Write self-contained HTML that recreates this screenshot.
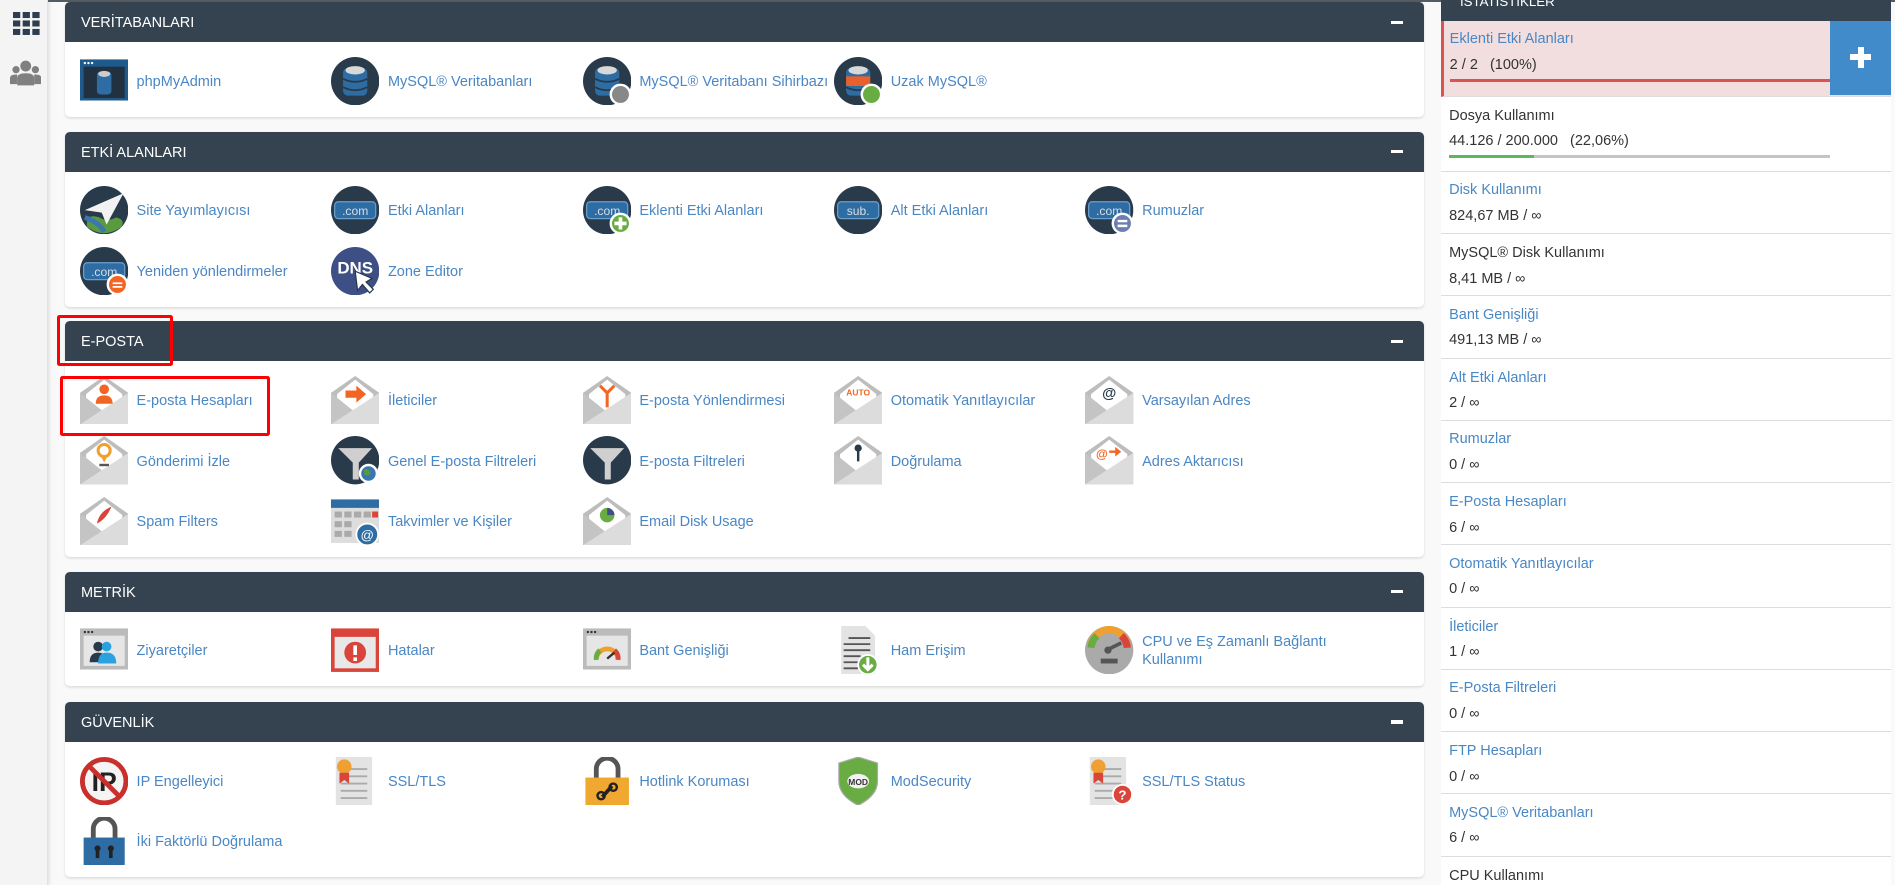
<!DOCTYPE html>
<html><head><meta charset="utf-8"><style>
*{box-sizing:border-box;margin:0;padding:0}
html,body{width:1895px;height:885px;overflow:hidden;background:#f9f9f9}
#w{zoom:1.2086;width:1568px;height:732px;position:relative;font-family:"Liberation Sans",sans-serif;font-size:12px;color:#333}
.sb{position:absolute;left:0;top:0;width:40px;height:732px;background:#f4f4f4;border-right:1px solid #e2e2e2;box-shadow:1px 0 3px rgba(0,0,0,.12)}
.topline{position:absolute;left:40px;top:0;width:1528px;height:2px;background:#555c63}
.p{position:absolute;left:54px;width:1124px;background:#fff;border-radius:4px;box-shadow:0 1px 2px rgba(0,0,0,.12)}
.h{height:33px;background:#34434f;border-radius:4px 4px 0 0;color:#fff;font-size:12px;line-height:35px;padding-left:13px;position:relative}
.h:after{content:"";position:absolute;right:17px;top:15px;width:10px;height:3px;background:#fff}
.it{position:absolute;width:205px;height:44px;display:flex;align-items:center}
.it svg{width:40px;height:40px;flex:none;margin-right:7px}
.it span{color:#4a87c5;font-size:12px;line-height:15px;padding-top:2px}
.st{position:absolute;left:1192px;width:373px;background:#fff;border-bottom:1px solid #ddd;padding-left:7px}
.st .l{color:#4a87c5;position:absolute;top:9px;left:7px}
.st .v{position:absolute;top:30px;left:7px;color:#333}
.st .d{color:#333}
.red{position:absolute;border:3px solid #f00;border-radius:2px}
</style></head><body><div id="w">
<svg width="0" height="0" style="position:absolute"><defs>
<symbol id="env" viewBox="0 0 40 40"><path d="M0 14L20 0L40 14V40H0Z" fill="#bdbdbd"/><path d="M20 3L35 15V26L20 32L5 26V15Z" fill="#fff"/><path d="M0 14L20 30L0 40Z" fill="#c4c4c4"/><path d="M40 14V40H0Z" fill="#dcdcdc"/></symbol>
<symbol id="db" viewBox="0 0 40 40"><circle cx="20" cy="20" r="20" fill="#293a4a"/><rect x="10" y="9" width="20" height="23" rx="4" fill="#2e6da4"/><ellipse cx="20" cy="11" rx="8" ry="3.5" fill="#d8d8d8"/><path d="M10 18Q20 23 30 18M10 25Q20 30 30 25" stroke="#293a4a" stroke-width="1.5" fill="none"/></symbol>
<symbol id="com" viewBox="0 0 40 40"><circle cx="20" cy="20" r="20" fill="#293a4a"/><rect x="3" y="13" width="34" height="14" rx="3" fill="#2e6da4" stroke="#6aa0cf"/></symbol>
<symbol id="win" viewBox="0 0 40 40"><rect x="0" y="2" width="40" height="34" fill="#bbb"/><rect x="3" y="8" width="34" height="25" fill="#e6e6e6"/><circle cx="4" cy="5" r="1" fill="#333"/><circle cx="7" cy="5" r="1" fill="#333"/><circle cx="10" cy="5" r="1" fill="#333"/></symbol>
<symbol id="doc" viewBox="0 0 40 40"><rect x="4" y="0" width="30" height="40" fill="#e3e3e3"/><path d="M12 10H30M12 16H30M8 22H30M8 28H30M8 34H30" stroke="#aaa" stroke-width="1.5"/><circle cx="11" cy="8" r="6" fill="#f0a030"/><path d="M7 13V22L11 19L15 22V13Z" fill="#d9453b"/></symbol>
</defs></svg>
<div class="sb"><svg style="position:absolute;left:11px;top:10px" width="22" height="20"><g fill="#2d3e50"><rect x="0" y="0" width="6" height="5"/><rect x="8" y="0" width="6" height="5"/><rect x="16" y="0" width="6" height="5"/><rect x="0" y="7" width="6" height="5"/><rect x="8" y="7" width="6" height="5"/><rect x="16" y="7" width="6" height="5"/><rect x="0" y="14" width="6" height="5"/><rect x="8" y="14" width="6" height="5"/><rect x="16" y="14" width="6" height="5"/></g></svg>
<svg style="position:absolute;left:8px;top:50px" width="26" height="22"><g fill="#808080"><circle cx="13" cy="5" r="4.5"/><circle cx="5" cy="8" r="3"/><circle cx="21" cy="8" r="3"/><path d="M6 21V15Q6 11 13 11Q20 11 20 15V21Z"/><path d="M0 20V15Q0 12 5 12L6 12V20Z"/><path d="M26 20V15Q26 12 21 12L20 12V20Z"/></g></svg></div>
<div class="topline"></div>

<div class="p" style="top:2px;height:95px"><div class="h">VERİTABANLARI</div>
<div class="it" style="left:12px;top:43px"><svg viewBox="0 0 40 40"><rect y="2" width="40" height="34" fill="#1e5b8c"/><rect x="3" y="8" width="34" height="26" fill="#22313f"/><circle cx="4" cy="5" r="1" fill="#fff"/><circle cx="7" cy="5" r="1" fill="#fff"/><circle cx="10" cy="5" r="1" fill="#fff"/><rect x="14" y="12" width="12" height="19" rx="3" fill="#2e6da4"/><ellipse cx="20" cy="14" rx="5" ry="2.5" fill="#ccc"/></svg><span>phpMyAdmin</span></div>
<div class="it" style="left:220px;top:43px"><svg><use href="#db"/></svg><span>MySQL® Veritabanları</span></div>
<div class="it" style="left:428px;top:43px"><svg viewBox="0 0 40 40"><use href="#db"/><circle cx="31" cy="31" r="8" fill="#888" stroke="#fff" stroke-width="2"/></svg><span>MySQL® Veritabanı Sihirbazı</span></div>
<div class="it" style="left:636px;top:43px"><svg viewBox="0 0 40 40"><use href="#db"/><rect x="10" y="16" width="20" height="8" fill="#e8602c"/><circle cx="31" cy="31" r="8" fill="#6aac44" stroke="#fff" stroke-width="2"/></svg><span>Uzak MySQL®</span></div>
</div>

<div class="p" style="top:109px;height:145px"><div class="h">ETKİ ALANLARI</div>
<div class="it" style="left:12px;top:43px"><svg viewBox="0 0 40 40"><circle cx="20" cy="20" r="20" fill="#293a4a"/><path d="M6 34Q4 22 16 26Q22 30 30 26Q38 28 34 34Q20 44 6 34Z" fill="#5a9a3f"/><path d="M4 26Q16 30 20 38" stroke="#3a76b0" stroke-width="4" fill="none"/><path d="M4 20L36 6L22 32L18 22Z" fill="#f2f2f2"/></svg><span>Site Yayımlayıcısı</span></div>
<div class="it" style="left:220px;top:43px"><svg viewBox="0 0 40 40"><use href="#com"/><text x="20" y="24" font-size="10" fill="#ddd" text-anchor="middle" font-family="Liberation Sans">.com</text></svg><span>Etki Alanları</span></div>
<div class="it" style="left:428px;top:43px"><svg viewBox="0 0 40 40"><use href="#com"/><text x="20" y="24" font-size="10" fill="#ddd" text-anchor="middle" font-family="Liberation Sans">.com</text><circle cx="31" cy="31" r="8" fill="#6aac44" stroke="#fff" stroke-width="2"/><path d="M31 26V36M26 31H36" stroke="#fff" stroke-width="3"/></svg><span>Eklenti Etki Alanları</span></div>
<div class="it" style="left:636px;top:43px"><svg viewBox="0 0 40 40"><use href="#com"/><text x="20" y="24" font-size="10" fill="#ddd" text-anchor="middle" font-family="Liberation Sans">sub.</text></svg><span>Alt Etki Alanları</span></div>
<div class="it" style="left:844px;top:43px"><svg viewBox="0 0 40 40"><use href="#com"/><text x="20" y="24" font-size="10" fill="#ddd" text-anchor="middle" font-family="Liberation Sans">.com</text><circle cx="31" cy="31" r="8" fill="#6d7fb0" stroke="#fff" stroke-width="2"/><path d="M27 29H35M27 33H35" stroke="#fff" stroke-width="2"/></svg><span>Rumuzlar</span></div>
<div class="it" style="left:12px;top:93px"><svg viewBox="0 0 40 40"><use href="#com"/><text x="20" y="24" font-size="10" fill="#ddd" text-anchor="middle" font-family="Liberation Sans">.com</text><circle cx="31" cy="31" r="8" fill="#f26522" stroke="#fff" stroke-width="2"/><path d="M27 30H35M27 33H35" stroke="#fff" stroke-width="1.5"/></svg><span>Yeniden yönlendirmeler</span></div>
<div class="it" style="left:220px;top:93px"><svg viewBox="0 0 40 40"><circle cx="20" cy="20" r="20" fill="#3d4f84"/><text x="20" y="22" font-size="14" font-weight="bold" fill="#fff" text-anchor="middle" font-family="Liberation Sans">DNS</text><path d="M20 20L22 36L26 31L32 38L35 35L29 29L34 26Z" fill="#fff" stroke="#293a4a"/></svg><span>Zone Editor</span></div>
</div>

<div class="p" style="top:266px;height:195px"><div class="h">E-POSTA</div>
<div class="it" style="left:12px;top:43px"><svg viewBox="0 0 40 40"><use href="#env"/><circle cx="20" cy="11" r="4" fill="#f26522"/><path d="M13 23Q13 16 20 16Q27 16 27 23Z" fill="#f26522"/></svg><span>E-posta Hesapları</span></div>
<div class="it" style="left:220px;top:43px"><svg viewBox="0 0 40 40"><use href="#env"/><path d="M12 12H21V8L29 15L21 22V18H12Z" fill="#f26522"/></svg><span>İleticiler</span></div>
<div class="it" style="left:428px;top:43px"><svg viewBox="0 0 40 40"><use href="#env"/><path d="M20 26V14L14 8M20 14L26 8" stroke="#f26522" stroke-width="2.5" fill="none"/></svg><span>E-posta Yönlendirmesi</span></div>
<div class="it" style="left:636px;top:43px"><svg viewBox="0 0 40 40"><use href="#env"/><text x="20" y="16" font-size="7" font-weight="bold" fill="#f26522" text-anchor="middle" font-family="Liberation Sans">AUTO</text></svg><span>Otomatik Yanıtlayıcılar</span></div>
<div class="it" style="left:844px;top:43px"><svg viewBox="0 0 40 40"><use href="#env"/><text x="20" y="18" font-size="12" font-weight="bold" fill="#293a4a" text-anchor="middle" font-family="Liberation Sans">@</text></svg><span>Varsayılan Adres</span></div>
<div class="it" style="left:12px;top:93px"><svg viewBox="0 0 40 40"><use href="#env"/><circle cx="20" cy="12" r="5" fill="none" stroke="#f0a030" stroke-width="2.5"/><path d="M17 16L20 22L23 16" fill="#f0a030"/><rect x="16" y="23" width="8" height="2" fill="#555"/></svg><span>Gönderimi İzle</span></div>
<div class="it" style="left:220px;top:93px"><svg viewBox="0 0 40 40"><circle cx="20" cy="20" r="20" fill="#293a4a"/><path d="M6 10H34L23 22V36H18V22Z" fill="#cfcfcf"/><circle cx="31" cy="31" r="7" fill="#3a76b0" stroke="#fff" stroke-width="2"/><path d="M27 28Q31 26 33 31Q30 34 28 32Z" fill="#5a9a3f"/></svg><span>Genel E-posta Filtreleri</span></div>
<div class="it" style="left:428px;top:93px"><svg viewBox="0 0 40 40"><circle cx="20" cy="20" r="20" fill="#293a4a"/><path d="M6 10H34L23 22V36H18V22Z" fill="#cfcfcf"/></svg><span>E-posta Filtreleri</span></div>
<div class="it" style="left:636px;top:93px"><svg viewBox="0 0 40 40"><use href="#env"/><circle cx="20" cy="10" r="3" fill="#293a4a"/><rect x="19" y="12" width="2" height="9" fill="#293a4a"/></svg><span>Doğrulama</span></div>
<div class="it" style="left:844px;top:93px"><svg viewBox="0 0 40 40"><use href="#env"/><text x="14" y="18" font-size="10" font-weight="bold" fill="#f26522" text-anchor="middle" font-family="Liberation Sans">@</text><path d="M20 12H25V9L30 13L25 17V14H20Z" fill="#f26522"/></svg><span>Adres Aktarıcısı</span></div>
<div class="it" style="left:12px;top:143px"><svg viewBox="0 0 40 40"><use href="#env"/><path d="M14 22Q16 12 26 8Q22 18 14 22Z" fill="#d9453b"/></svg><span>Spam Filters</span></div>
<div class="it" style="left:220px;top:143px"><svg viewBox="0 0 40 40"><rect x="0" y="2" width="40" height="36" fill="#ddd"/><rect x="0" y="2" width="40" height="7" fill="#2e6da4"/><g fill="#aaa"><rect x="3" y="12" width="6" height="5"/><rect x="11" y="12" width="6" height="5"/><rect x="19" y="12" width="6" height="5"/><rect x="27" y="12" width="6" height="5"/><rect x="3" y="20" width="6" height="5"/><rect x="11" y="20" width="6" height="5"/><rect x="3" y="28" width="6" height="5"/><rect x="11" y="28" width="6" height="5"/></g><rect x="34" y="12" width="5" height="5" fill="#d9453b"/><circle cx="30" cy="31" r="9" fill="#2e6da4" stroke="#fff" stroke-width="1.5"/><text x="30" y="35" font-size="11" fill="#fff" text-anchor="middle" font-family="Liberation Sans">@</text></svg><span>Takvimler ve Kişiler</span></div>
<div class="it" style="left:428px;top:143px"><svg viewBox="0 0 40 40"><use href="#env"/><circle cx="20" cy="15" r="6" fill="#6aac44"/><path d="M20 15V9A6 6 0 0 1 26 15Z" fill="#3d4f84"/></svg><span>Email Disk Usage</span></div>
</div>

<div class="p" style="top:473px;height:95px"><div class="h">METRİK</div>
<div class="it" style="left:12px;top:43px"><svg viewBox="0 0 40 40"><use href="#win"/><circle cx="15" cy="17" r="4" fill="#293a4a"/><path d="M8 30Q8 22 15 22Q22 22 22 30Z" fill="#293a4a"/><circle cx="22" cy="17" r="4" fill="#29a3e0"/><path d="M15 31Q15 22 22 22Q30 22 30 31Z" fill="#29a3e0"/></svg><span>Ziyaretçiler</span></div>
<div class="it" style="left:220px;top:43px"><svg viewBox="0 0 40 40"><rect x="0" y="2" width="40" height="36" fill="#d9453b"/><rect x="3" y="9" width="34" height="26" fill="#e8e8e8"/><circle cx="20" cy="22" r="9" fill="#d9453b"/><rect x="18.5" y="16" width="3" height="8" fill="#fff"/><rect x="18.5" y="26" width="3" height="3" fill="#fff"/></svg><span>Hatalar</span></div>
<div class="it" style="left:428px;top:43px"><svg viewBox="0 0 40 40"><use href="#win"/><path d="M11 28A9 9 0 0 1 29 28" stroke="#f0a030" stroke-width="4" fill="none"/><path d="M11 28A9 9 0 0 1 14 20" stroke="#6aac44" stroke-width="4" fill="none"/><path d="M26 20A9 9 0 0 1 29 28" stroke="#d9453b" stroke-width="4" fill="none"/><path d="M20 27L26 22" stroke="#333" stroke-width="2"/></svg><span>Bant Genişliği</span></div>
<div class="it" style="left:636px;top:43px"><svg viewBox="0 0 40 40"><path d="M6 0H26L34 8V40H6Z" fill="#e3e3e3"/><path d="M12 10H30M8 15H30M8 20H30M8 25H22M8 30H20M8 35H20" stroke="#555" stroke-width="1.5"/><circle cx="28" cy="32" r="8" fill="#6aac44" stroke="#fff" stroke-width="1.5"/><path d="M28 26V36M24 32L28 36L32 32" stroke="#fff" stroke-width="2.5" fill="none"/></svg><span>Ham Erişim</span></div>
<div class="it" style="left:844px;top:43px"><svg viewBox="0 0 40 40"><circle cx="20" cy="20" r="20" fill="#aaa"/><path d="M5 18A15 15 0 0 1 35 18" stroke="#f0a030" stroke-width="6" fill="none"/><path d="M5 18A15 15 0 0 1 10 8" stroke="#6aac44" stroke-width="6" fill="none"/><path d="M30 8A15 15 0 0 1 35 18" stroke="#d9453b" stroke-width="6" fill="none"/><path d="M18 20L30 14" stroke="#555" stroke-width="3"/><circle cx="19" cy="20" r="3" fill="#555"/><rect x="13" y="27" width="14" height="4" fill="#555"/></svg><span>CPU ve Eş Zamanlı Bağlantı<br>Kullanımı</span></div>
</div>

<div class="p" style="top:581px;height:145px"><div class="h">GÜVENLİK</div>
<div class="it" style="left:12px;top:43px"><svg viewBox="0 0 40 40"><circle cx="20" cy="20" r="18" fill="#f4f4f4" stroke="#c9302c" stroke-width="4"/><text x="20" y="28" font-size="22" font-weight="bold" fill="#222" text-anchor="middle" font-family="Liberation Sans">IP</text><path d="M8 8L32 32" stroke="#c9302c" stroke-width="4"/></svg><span>IP Engelleyici</span></div>
<div class="it" style="left:220px;top:43px"><svg><use href="#doc"/></svg><span>SSL/TLS</span></div>
<div class="it" style="left:428px;top:43px"><svg viewBox="0 0 40 40"><path d="M11 18V10A9 9 0 0 1 29 10V18" stroke="#555" stroke-width="4" fill="none"/><rect x="2" y="17" width="36" height="23" fill="#f0a830"/><path d="M16 33L24 24" stroke="#222" stroke-width="3"/><circle cx="15" cy="32" r="3" fill="none" stroke="#222" stroke-width="2"/><circle cx="25" cy="25" r="3" fill="none" stroke="#222" stroke-width="2"/></svg><span>Hotlink Koruması</span></div>
<div class="it" style="left:636px;top:43px"><svg viewBox="0 0 40 40"><path d="M20 0L36 5V20Q36 32 20 40Q4 32 4 20V5Z" fill="#6aac44" stroke="#aaa"/><ellipse cx="20" cy="20" rx="9" ry="6" fill="#f2f2f2"/><text x="20" y="23" font-size="7" font-weight="bold" fill="#333" text-anchor="middle" font-family="Liberation Sans">MOD</text></svg><span>ModSecurity</span></div>
<div class="it" style="left:844px;top:43px"><svg viewBox="0 0 40 40"><use href="#doc"/><circle cx="31" cy="31" r="8" fill="#d9453b" stroke="#fff" stroke-width="1.5"/><text x="31" y="35" font-size="11" font-weight="bold" fill="#fff" text-anchor="middle" font-family="Liberation Sans">?</text></svg><span>SSL/TLS Status</span></div>
<div class="it" style="left:12px;top:93px"><svg viewBox="0 0 40 40"><path d="M11 18V10A9 9 0 0 1 29 10V18" stroke="#555" stroke-width="4" fill="none"/><rect x="3" y="17" width="34" height="23" fill="#2e6da4"/><rect x="13" y="26" width="3" height="8" fill="#222"/><rect x="24" y="26" width="3" height="8" fill="#222"/><circle cx="14.5" cy="26" r="2.5" fill="#222"/><circle cx="25.5" cy="26" r="2.5" fill="#222"/></svg><span>İki Faktörlü Doğrulama</span></div>
</div>

<div class="red" style="left:47px;top:261px;width:96px;height:42px"></div>
<div class="red" style="left:50px;top:311px;width:173px;height:50px"></div>

<div style="position:absolute;left:1192px;top:0;width:373px;height:17px;background:#34434f;color:#fff;font-size:11px;line-height:4px;padding-left:16px;overflow:hidden">İSTATİSTİKLER</div>
<div class="st" style="top:17px;height:63px;background:#f2dede;border-left:3px solid #d9534f"><span class="l" style="left:5px;top:9px">Eklenti Etki Alanları</span><span class="v" style="left:5px;top:30px">2 / 2 &nbsp;&nbsp;(100%)</span><div style="position:absolute;left:5px;top:48px;height:3px;background:#d9534f;width:318px"></div><div style="position:absolute;right:0;top:0;width:51px;height:62px;background:#428bca"><div style="position:absolute;left:17px;top:28px;width:17px;height:5px;background:#fff"></div><div style="position:absolute;left:23px;top:22px;width:5px;height:17px;background:#fff"></div></div></div>
<div class="st" style="top:80px;height:62px"><span class="l d" style="top:9px">Dosya Kullanımı</span><span class="v">44.126 / 200.000 &nbsp;&nbsp;(22,06%)</span><div style="position:absolute;left:7px;top:48px;width:315px;height:3px;background:#c4c4c4"><div style="width:70px;height:3px;background:#5cb85c"></div></div></div>
<div class="st" style="top:142px;height:52px"><span class="l">Disk Kullanımı</span><span class="v">824,67 MB / ∞</span></div>
<div class="st" style="top:194px;height:51px"><span class="l d">MySQL® Disk Kullanımı</span><span class="v">8,41 MB / ∞</span></div>
<div class="st" style="top:245px;height:52px"><span class="l">Bant Genişliği</span><span class="v">491,13 MB / ∞</span></div>
<div class="st" style="top:297px;height:51px"><span class="l">Alt Etki Alanları</span><span class="v">2 / ∞</span></div>
<div class="st" style="top:348px;height:52px"><span class="l">Rumuzlar</span><span class="v">0 / ∞</span></div>
<div class="st" style="top:400px;height:51px"><span class="l">E-Posta Hesapları</span><span class="v">6 / ∞</span></div>
<div class="st" style="top:451px;height:52px"><span class="l">Otomatik Yanıtlayıcılar</span><span class="v">0 / ∞</span></div>
<div class="st" style="top:503px;height:51px"><span class="l">İleticiler</span><span class="v">1 / ∞</span></div>
<div class="st" style="top:554px;height:52px"><span class="l">E-Posta Filtreleri</span><span class="v">0 / ∞</span></div>
<div class="st" style="top:606px;height:51px"><span class="l">FTP Hesapları</span><span class="v">0 / ∞</span></div>
<div class="st" style="top:657px;height:52px"><span class="l">MySQL® Veritabanları</span><span class="v">6 / ∞</span></div>
<div class="st" style="top:709px;height:30px;border-bottom:none"><span class="l d">CPU Kullanımı</span></div>
</div></body></html>
